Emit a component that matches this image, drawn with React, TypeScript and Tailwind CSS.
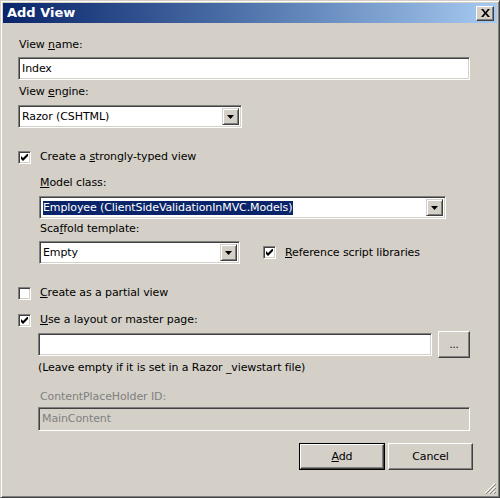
import React from 'react';

const font = { fontFamily: '"DejaVu Sans", Verdana, sans-serif' };

function Sunken({ className = '', children }: { className?: string; children?: React.ReactNode }) {
  return (
    <div
      className={`border border-t-[#808080] border-l-[#808080] border-b-white border-r-white shadow-[inset_1px_1px_0_#404040,inset_-1px_-1px_0_#d4d0c8] ${className}`}
    >
      {children}
    </div>
  );
}

function Arrow() {
  return (
    <div className="w-[17px] h-full bg-[#d4d0c8] border border-t-[#d4d0c8] border-l-[#d4d0c8] border-b-[#404040] border-r-[#404040] shadow-[inset_1px_1px_0_white,inset_-1px_-1px_0_#808080] flex items-center justify-center">
      <svg width="7" height="4" viewBox="0 0 7 4">
        <path d="M0 0h7L3.5 4z" fill="black" />
      </svg>
    </div>
  );
}

function Select({ value, className = '', selected = false }: { value: string; className?: string; selected?: boolean }) {
  return (
    <Sunken className={`h-[23px] bg-white flex items-stretch p-[2px] ${className}`}>
      <div className="flex-1 flex items-center pl-[1px] min-w-0">
        <span className={selected ? 'bg-[#0a246a] text-white pr-[1px]' : ''}>{value}</span>
      </div>
      <Arrow />
    </Sunken>
  );
}

function Check({ checked }: { checked: boolean }) {
  return (
    <Sunken className="w-[13px] h-[13px] bg-white flex items-center justify-center shrink-0">
      {checked && (
        <svg width="7" height="7" viewBox="0 0 7 7">
          <path d="M0 2v3l2 2 5-5V-1L2 4z" fill="black" />
        </svg>
      )}
    </Sunken>
  );
}

function Button({ children, isDefault = false, className = '' }: { children: React.ReactNode; isDefault?: boolean; className?: string }) {
  return (
    <div className={`${isDefault ? 'border border-black' : ''} ${className}`}>
      <div className="h-full bg-[#d4d0c8] border border-t-white border-l-white border-b-[#404040] border-r-[#404040] shadow-[inset_-1px_-1px_0_#808080] flex items-center justify-center">
        {children}
      </div>
    </div>
  );
}

export default function App() {
  return (
    <div
      className="w-[500px] h-[498px] bg-[#d4d0c8] border border-t-[#d4d0c8] border-l-[#d4d0c8] border-b-[#404040] border-r-[#404040] shadow-[inset_1px_1px_0_white,inset_-1px_-1px_0_#808080] p-[2px] flex flex-col text-[11px] tracking-[-0.1px] text-black leading-[14px] relative"
      style={font}
    >
      {/* Title bar */}
      <div className="h-[20px] shrink-0 bg-gradient-to-r from-[#0a246a] to-[#a6caf0] flex items-center justify-between pl-[4px] pr-[3px]">
        <span className="text-white font-bold text-[13px] tracking-normal">Add View</span>
        <Button className="w-[18px] h-[15px]">
          <svg width="9" height="8" viewBox="0 0 8 7">
            <path d="M0 0h2l2 2.5L6 0h2L5 3.5 8 7H6L4 4.5 2 7H0l3-3.5z" fill="black" />
          </svg>
        </Button>
      </div>

      <div className="flex-1 flex flex-col pl-[15px] pr-[27px]">
        <div className="mt-[15px] pl-[1px]">
          View <u>n</u>ame:
        </div>
        <Sunken className="mt-[5px] h-[23px] bg-white flex items-center pl-[3px]">Index</Sunken>

        <div className="mt-[5px] pl-[1px]">
          View <u>e</u>ngine:
        </div>
        <Select value="Razor (CSHTML)" className="mt-[6px] w-[224px]" />

        <div className="mt-[22px] flex items-center gap-[9px]">
          <Check checked />
          <span>
            Create a <u>s</u>trongly-typed view
          </span>
        </div>

        <div className="pl-[21px] flex flex-col">
          <div className="mt-[12px] pl-[1px]">
            <u>M</u>odel class:
          </div>
          <Select value="Employee (ClientSideValidationInMVC.Models)" selected className="mt-[6px] w-[407px]" />
          <div className="mt-[3px] pl-[1px]">
            Sca<u>f</u>fold template:
          </div>
          <div className="mt-[5px] flex items-center">
            <Select value="Empty" className="w-[201px]" />
            <div className="ml-[23px] flex items-center gap-[9px]">
              <Check checked />
              <span>
                <u>R</u>eference script libraries
              </span>
            </div>
          </div>
        </div>

        <div className="mt-[22px] flex items-center gap-[9px]">
          <Check checked={false} />
          <span>
            <u>C</u>reate as a partial view
          </span>
        </div>
        <div className="mt-[13px] flex items-center gap-[9px]">
          <Check checked />
          <span>
            <u>U</u>se a layout or master page:
          </span>
        </div>

        <div className="pl-[20px] flex flex-col">
          <div className="mt-[4px] flex items-center gap-[6px]">
            <Sunken className="w-[394px] h-[23px] bg-white" />
            <Button className="w-[32px] h-[27px]">
              <span className="text-[10px] leading-none">...</span>
            </Button>
          </div>
          <div className="mt-[3px]">(Leave empty if it is set in a Razor _viewstart file)</div>
          <div className="mt-[15px] pl-[2px] text-[#808080]">
            ContentPlaceHolder ID:
          </div>
          <Sunken className="mt-[3px] w-[432px] h-[24px] bg-[#d4d0c8] flex items-center pl-[3px] text-[#808080]">
            MainContent
          </Sunken>
        </div>

        <div className="mt-[12px] -mr-[3px] flex justify-end gap-[3px]">
          <Button isDefault className="w-[86px] h-[27px]">
            <span>
              <u>A</u>dd
            </span>
          </Button>
          <Button className="w-[85px] h-[27px]">Cancel</Button>
        </div>
      </div>

      {/* Resize grip */}
      <svg className="absolute right-[3px] bottom-[3px]" width="12" height="12" viewBox="0 0 12 12">
        <path d="M11 1L1 11M11 5L5 11M11 9L9 11" stroke="white" strokeWidth="1" />
        <path d="M12 2L2 12M12 6L6 12M12 10L10 12" stroke="#808080" strokeWidth="1" />
      </svg>
    </div>
  );
}
